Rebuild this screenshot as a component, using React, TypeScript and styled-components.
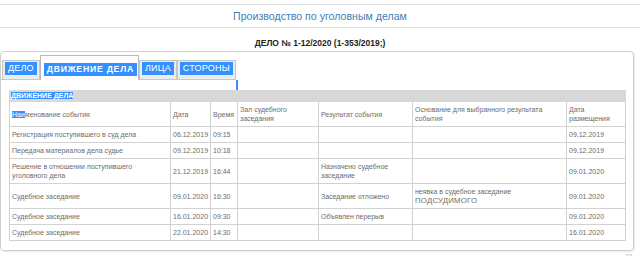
import styled, { createGlobalStyle } from "styled-components"

const Global = createGlobalStyle`
  body {
    margin: 0;
    background: #fff;
  }
`

const Page = styled.div`
  width: 640px;
  padding-top: 4px;
  font-family: "Liberation Sans", Arial, sans-serif;
  color: #666;
`

const TopBar = styled.div`
  border-top: 1px solid #dedede;
  border-bottom: 1px solid #dedede;
  height: 22px;
  line-height: 22px;
  text-align: center;
  font-size: 10.6px;
  color: #4380b9;
`

const CaseTitle = styled.div`
  padding: 10px 0 2px;
  line-height: 11px;
  text-align: center;
  font-size: 8.5px;
  font-weight: bold;
  color: #222;
`

const Panel = styled.div`
  width: 632px;
  height: 198px;
  border: 1px solid #cfcfcf;
  border-radius: 4px;
  box-shadow: 1px 1px 1px rgba(0, 0, 0, 0.08);
`

const TabStrip = styled.div`
  display: inline-flex;
  align-items: flex-end;
  padding: 3px 0 0 1px;
  border-bottom: 1px solid #c8c8c8;
  position: relative;
`

const Tab = styled.div<{ $active?: boolean }>`
  display: flex;
  border: 1px solid ${p => (p.$active ? "#b8b8b8" : "#c6c6c6")};
  border-bottom: none;
  background: ${p => (p.$active ? "#fff" : "#ececec")};
  padding: ${p => (p.$active ? "7px 1px 4px 3px" : "1px 2px 4px 2px")};
  margin-bottom: ${p => (p.$active ? "-1px" : "0")};
`

const TabLabel = styled.span<{ $bold?: boolean }>`
  display: block;
  background: #3390ff;
  color: #fff;
  font-size: ${p => (p.$bold ? "8.7px" : "9px")};
  line-height: 13px;
  padding: 0 3px;
  font-weight: ${p => (p.$bold ? "bold" : "normal")};
  letter-spacing: ${p => (p.$bold ? "0.75px" : "0.2px")};
`

const SelTail = styled.span`
  position: absolute;
  right: -2px;
  bottom: -11px;
  width: 2px;
  height: 10px;
  background: #3390ff;
`

const TableWrap = styled.div`
  padding: 10px 0 0 8px;
`

const Table = styled.table`
  border-collapse: collapse;
  table-layout: fixed;
  width: 617px;
  font-size: 7px;
  line-height: 9px;
  color: #6c6c6c;

  td,
  th {
    border: 1px solid #d2d2d2;
    padding: 3px 2px;
    vertical-align: middle;
    text-align: left;
    font-weight: normal;
  }
`

const CaptionCell = styled.th`
  && {
    background: #d8d8d8;
    padding: 0 1px;
    height: 10px;
    line-height: 10px;
    font-weight: bold;
    border-color: #d8d8d8;
  }
`

const HeadCell = styled.th`
  && {
    height: 18px;
    padding: 3px 2px;
  }
`

const Sel = styled.span`
  background: #3390ff;
  color: #fff;
`

const Upper = styled.span`
  display: inline-block;
  font-size: 7.8px;
  line-height: 9px;
  vertical-align: top;
  letter-spacing: 0.2px;
`

const Footer = styled.div`
  display: flex;
  justify-content: flex-end;
  padding: 3px 8px 0 0;
`

const ScrollBtn = styled.div`
  width: 4px;
  height: 4px;
  background: #ececec;
  border: 1px solid #e0e0e0;
`

type Row = {
  name: React.ReactNode
  date: string
  time: string
  hall?: string
  result?: React.ReactNode
  reason?: React.ReactNode
  posted: string
}

const rows: Row[] = [
  { name: "Регистрация поступившего в суд дела", date: "06.12.2019", time: "09:15", posted: "09.12.2019" },
  { name: "Передача материалов дела судье", date: "09.12.2019", time: "10:18", posted: "09.12.2019" },
  {
    name: <>Решение в отношении поступившего<br />уголовного дела</>,
    date: "21.12.2019",
    time: "16:44",
    result: <>Назначено судебное<br />заседание</>,
    posted: "09.01.2020",
  },
  {
    name: "Судебное заседание",
    date: "09.01.2020",
    time: "16:30",
    result: "Заседание отложено",
    reason: <>неявка в судебное заседание<br /><Upper>ПОДСУДИМОГО</Upper></>,
    posted: "09.01.2020",
  },
  { name: "Судебное заседание", date: "16.01.2020", time: "09:30", result: "Объявлен перерыв", posted: "09.01.2020" },
  { name: "Судебное заседание", date: "22.01.2020", time: "14:30", posted: "16.01.2020" },
]

export default function App() {
  return (
    <Page>
      <Global />
      <TopBar>Производство по уголовным делам</TopBar>
      <CaseTitle>ДЕЛО № 1-12/2020 (1-353/2019;)</CaseTitle>
      <Panel>
        <TabStrip>
          <Tab><TabLabel>ДЕЛО</TabLabel></Tab>
          <Tab $active><TabLabel $bold>ДВИЖЕНИЕ ДЕЛА</TabLabel></Tab>
          <Tab><TabLabel>ЛИЦА</TabLabel></Tab>
          <Tab><TabLabel>СТОРОНЫ</TabLabel></Tab>
          <SelTail />
        </TabStrip>
        <TableWrap>
          <Table>
            <colgroup>
              <col style={{ width: 161 }} />
              <col style={{ width: 40 }} />
              <col style={{ width: 27 }} />
              <col style={{ width: 81 }} />
              <col style={{ width: 94 }} />
              <col style={{ width: 154 }} />
              <col style={{ width: 59 }} />
            </colgroup>
            <thead>
              <tr>
                <CaptionCell colSpan={7}><Sel>ДВИЖЕНИЕ ДЕЛА</Sel></CaptionCell>
              </tr>
              <tr>
                <HeadCell><Sel>Наи</Sel>менование события</HeadCell>
                <HeadCell>Дата</HeadCell>
                <HeadCell>Время</HeadCell>
                <HeadCell>Зал судебного<br />заседания</HeadCell>
                <HeadCell>Результат события</HeadCell>
                <HeadCell>Основание для выбранного результата<br />события</HeadCell>
                <HeadCell>Дата<br />размещения</HeadCell>
              </tr>
            </thead>
            <tbody>
              {rows.map((r, i) => (
                <tr key={i}>
                  <td>{r.name}</td>
                  <td>{r.date}</td>
                  <td>{r.time}</td>
                  <td>{r.hall}</td>
                  <td>{r.result}</td>
                  <td>{r.reason}</td>
                  <td>{r.posted}</td>
                </tr>
              ))}
            </tbody>
          </Table>
        </TableWrap>
      </Panel>
      <Footer><ScrollBtn /></Footer>
    </Page>
  )
}
